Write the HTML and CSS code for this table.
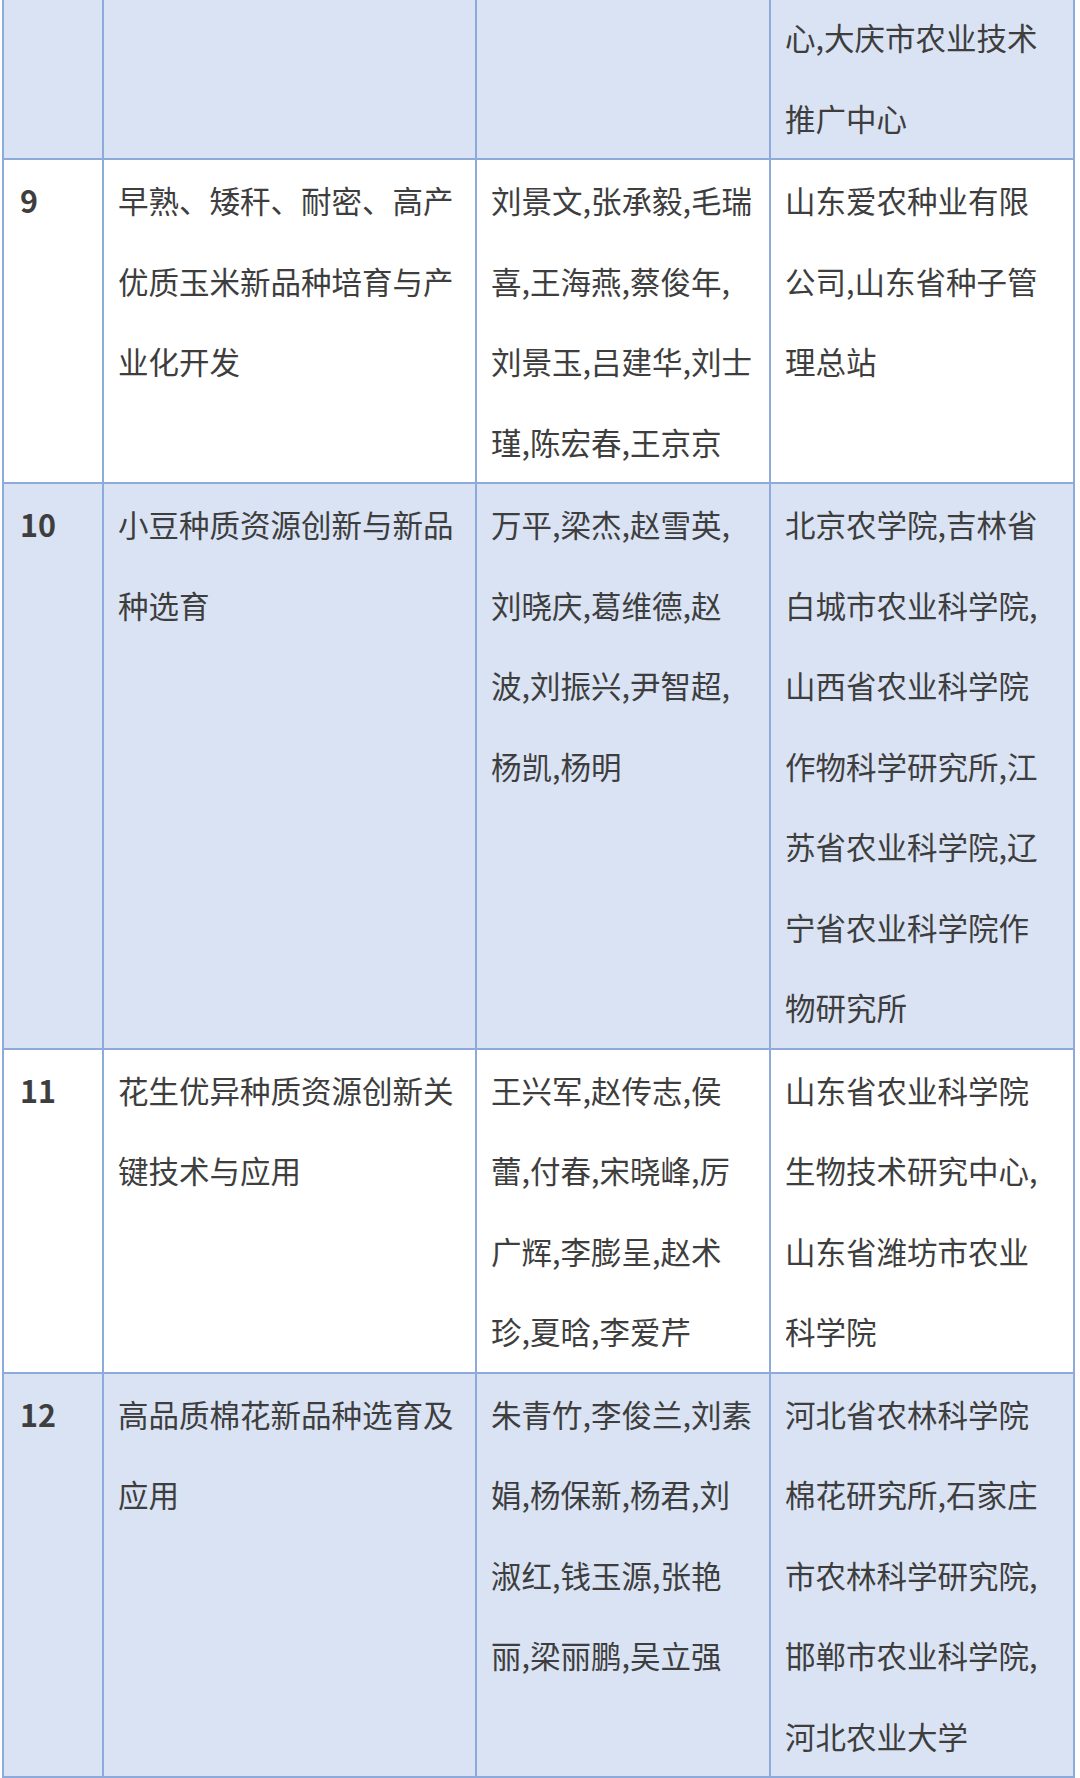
FILE: index.html
```html
<!DOCTYPE html>
<html lang="zh-CN">
<head>
<meta charset="utf-8">
<title>项目名单</title>
<link rel="stylesheet" href="styles.css">
</head>
<body>
<table class="list">
  <colgroup>
    <col class="c-no">
    <col class="c-name">
    <col class="c-people">
    <col class="c-org">
  </colgroup>
  <tbody>
    <tr class="alt first">
      <td></td>
      <td></td>
      <td></td>
      <td>心,大庆市农业技术<br>推广中心</td>
    </tr>
    <tr>
      <td class="no">9</td>
      <td>早熟、矮秆、耐密、高产<br>优质玉米新品种培育与产<br>业化开发</td>
      <td>刘景文,张承毅,毛瑞<br>喜,王海燕,蔡俊年,<br>刘景玉,吕建华,刘士<br>瑾,陈宏春,王京京</td>
      <td>山东爱农种业有限<br>公司,山东省种子管<br>理总站</td>
    </tr>
    <tr class="alt">
      <td class="no">10</td>
      <td>小豆种质资源创新与新品<br>种选育</td>
      <td>万平,梁杰,赵雪英,<br>刘晓庆,葛维德,赵<br>波,刘振兴,尹智超,<br>杨凯,杨明</td>
      <td>北京农学院,吉林省<br>白城市农业科学院,<br>山西省农业科学院<br>作物科学研究所,江<br>苏省农业科学院,辽<br>宁省农业科学院作<br>物研究所</td>
    </tr>
    <tr>
      <td class="no">11</td>
      <td>花生优异种质资源创新关<br>键技术与应用</td>
      <td>王兴军,赵传志,侯<br>蕾,付春,宋晓峰,厉<br>广辉,李膨呈,赵术<br>珍,夏晗,李爱芹</td>
      <td>山东省农业科学院<br>生物技术研究中心,<br>山东省潍坊市农业<br>科学院</td>
    </tr>
    <tr class="alt">
      <td class="no">12</td>
      <td>高品质棉花新品种选育及<br>应用</td>
      <td>朱青竹,李俊兰,刘素<br>娟,杨保新,杨君,刘<br>淑红,钱玉源,张艳<br>丽,梁丽鹏,吴立强</td>
      <td>河北省农林科学院<br>棉花研究所,石家庄<br>市农林科学研究院,<br>邯郸市农业科学院,<br>河北农业大学</td>
    </tr>
  </tbody>
</table>
</body>
</html>
```

FILE: styles.css
```css
html, body {
  margin: 0;
  padding: 0;
  background: #ffffff;
}

body {
  overflow: hidden;
}

.list {
  margin: -3px 0 0 2px;
  width: 1073px;
  table-layout: fixed;
  border-collapse: collapse;
  font-family: "Noto Sans CJK SC", "Noto Sans", sans-serif;
  font-size: 30.5px;
  line-height: 80.5px;
  color: #3e3e3e;
}

.c-no { width: 100px; }
.c-name { width: 373px; }
.c-people { width: 294px; }
.c-org { width: 304px; }

.list td {
  border: 2px solid #8eaadb;
  padding: 0 14px;
  vertical-align: top;
  white-space: nowrap;
  overflow: hidden;
}

.list tr.first td {
  border-top: none;
}

.list tr.alt td {
  background: #dae3f3;
}

.list td.no {
  font-weight: bold;
  padding-left: 16px;
}
```
